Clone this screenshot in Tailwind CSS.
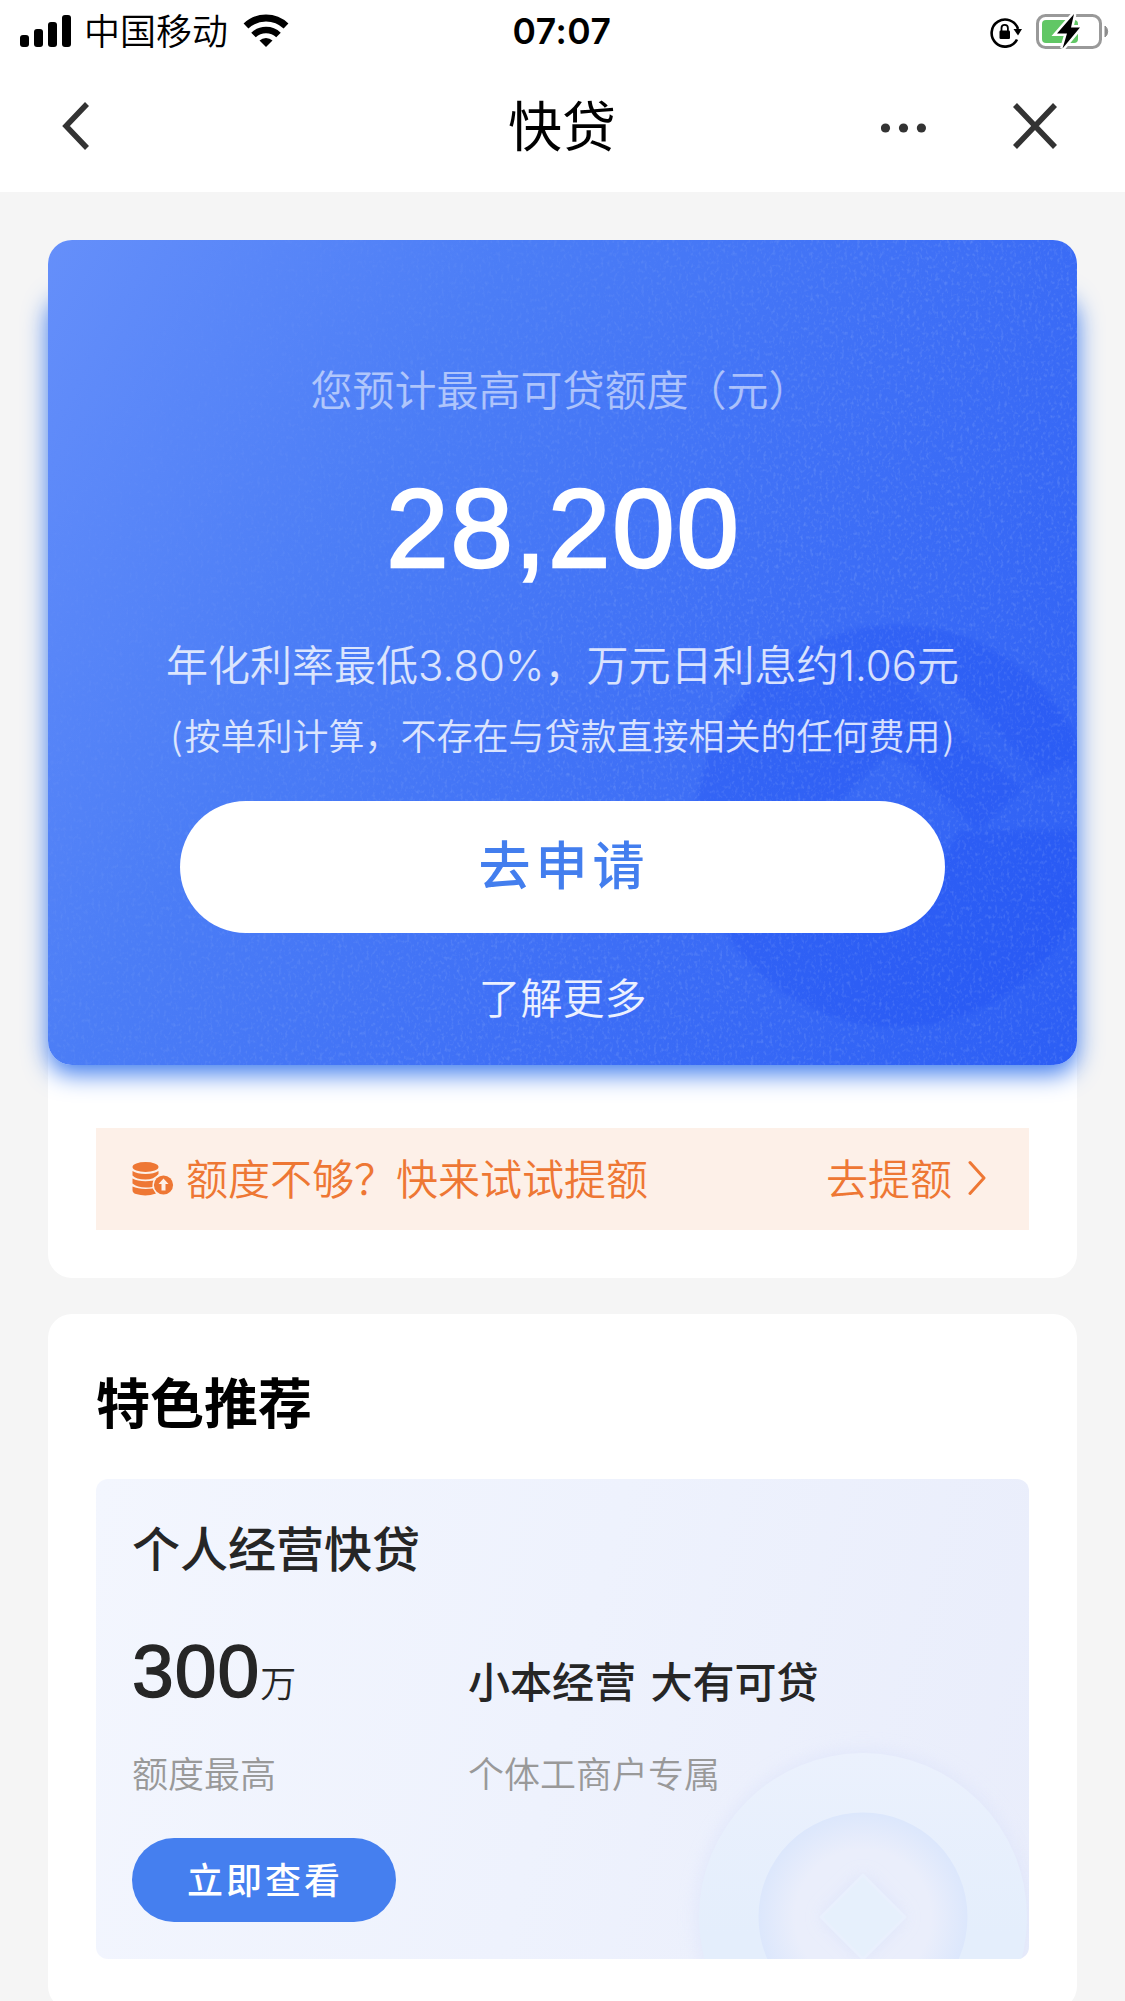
<!DOCTYPE html>
<html lang="zh-CN">
<head>
    <meta charset="UTF-8">
    <meta name="viewport" content="width=device-width, initial-scale=1.0">
    <title>快贷</title>
    <script src="https://cdn.jsdelivr.net/npm/@tailwindcss/browser@4"></script>
    <style>
        body {
            font-family: 'Noto Sans CJK SC', sans-serif;
            background-color: #f5f5f5;
        }
    </style>
</head>
<body>
<div class="w-[1125px] h-[2001px] overflow-hidden bg-[#f5f5f5]">
    <!-- Header -->
    <header class="h-48 bg-white">
        <div class="h-[60px] grid grid-cols-3 items-center pl-5 pr-[15px] text-black">
            <div class="flex items-center">
                <svg width="51" height="32" viewBox="0 0 51 32">
                    <rect x="0" y="20" width="9" height="12" rx="3"/>
                    <rect x="14" y="14" width="9" height="18" rx="3"/>
                    <rect x="28" y="7" width="9" height="25" rx="3"/>
                    <rect x="42" y="0" width="9" height="32" rx="3"/>
                </svg>
                <span class="ml-[13px] -mt-1 text-[36px] leading-[60px] font-[350]">中国移动</span>
                <svg class="ml-[15px] -mt-0.5" width="46" height="33" viewBox="0 0 46 33">
                    <path d="M3 12 A29 29 0 0 1 43 12" fill="none" stroke="#000" stroke-width="7"/>
                    <path d="M10.5 21 A18 18 0 0 1 35.500 21" fill="none" stroke="#000" stroke-width="6.500"/>
                    <path d="M23 33 L16.500 26.500 A9.500 9.500 0 0 1 29.500 26.500 Z"/>
                </svg>
            </div>
            <div class="text-center font-semibold text-[35.5px] leading-[60px] tracking-[0.5px] mt-0.5 -ml-1.5 font-[Inter]">07:07</div>
            <div class="flex items-center justify-end gap-[14px]">
                <svg class="mt-0.5" width="32" height="34" viewBox="0 0 32 34">
                    <path d="M27 24.500 A13.500 13.500 0 1 1 28 14" fill="none" stroke="#000" stroke-width="2.600"/>
                    <path d="M23.500 14 L32 14 L28 20.500 Z"/>
                    <rect x="9.500" y="15.500" width="10.500" height="8.500" rx="1.200"/>
                    <path d="M11.500 16 V13 a3.200 3.200 0 0 1 6.400 0 V16" fill="none" stroke="#000" stroke-width="1.800"/>
                </svg>
                <svg width="74" height="36" viewBox="0 0 74 36">
                    <rect x="1.500" y="2.500" width="63" height="32" rx="8" fill="none" stroke="#999" stroke-width="3"/>
                    <rect x="6" y="7" width="36" height="23" rx="4" fill="#61c765"/>
                    <path d="M69 13 a7 7 0 0 1 0 11 Z" fill="#8c8c8c" stroke="#8c8c8c"/>
                    <path d="M38 1 L21 20.500 L31 20.500 L26.500 35.500 L44 14.500 L35 14.500 Z" stroke="#fff" stroke-width="5"/>
                    <path d="M38 1 L21 20.500 L31 20.500 L26.500 35.500 L44 14.500 L35 14.500 Z"/>
                </svg>
            </div>
        </div>
        <div class="h-[132px] grid grid-cols-3 items-center pl-[62px] pr-[68px]">
            <svg width="28" height="48" viewBox="0 0 28 48" fill="none" stroke="#333" stroke-width="5.500">
                <path d="M25 2 L4 24 L25 46"/>
            </svg>
            <h1 class="text-center text-[54px] leading-[132px] -mt-1 ml-[5px] text-black">快贷</h1>
            <div class="flex items-center justify-end gap-[87px]">
                <svg class="mt-1" width="45" height="10" viewBox="0 0 45 10" fill="#333">
                    <circle cx="4.500" cy="5" r="4.600"/><circle cx="22.500" cy="5" r="4.600"/><circle cx="40.400" cy="5" r="4.600"/>
                </svg>
                <svg width="44" height="46" viewBox="0 0 44 46" stroke="#333" stroke-width="5.500">
                    <path d="M2 2 L42 44 M42 2 L2 44"/>
                </svg>
            </div>
        </div>
    </header>

    <main class="px-12 pt-12">
        <!-- Credit limit -->
        <section class="bg-white rounded-3xl pb-12">
            <div class="relative h-[825px]">
                <div class="absolute inset-x-0 top-12 bottom-0 rounded-3xl shadow-[0_9px_24px_0_#3f7cee]"></div>
                <div class="absolute inset-0 rounded-3xl overflow-hidden bg-[linear-gradient(119deg,#658ffa_0%,#4b7df6_32%,#3e6ff6_62%,#2c5ef5_100%)]">
                    <svg width="1029" height="825" viewBox="0 0 1029 825">
                        <filter id="grain" x="0" y="0" width="100%" height="100%">
                            <feTurbulence type="fractalNoise" baseFrequency="0.32 0.24" numOctaves="2" seed="4"/>
                            <feColorMatrix values="0 0 0 0 0.6  0 0 0 0 0.75  0 0 0 0 1  1.500 0 0 0 -0.750"/>
                        </filter>
                        <linearGradient id="grainFade" x1="0" y1="0" x2="1" y2="0.500">
                            <stop offset="0.050" stop-color="#000"/>
                            <stop offset="0.700" stop-color="#fff"/>
                        </linearGradient>
                        <mask id="grainMask"><rect width="1029" height="825" fill="url(#grainFade)"/></mask>
                        <filter id="edge"><feGaussianBlur stdDeviation="2"/></filter>
                        <!-- coin with the pen cut out of it -->
                        <mask id="coin">
                            <g filter="url(#edge)">
                                <circle cx="848" cy="586" r="201" fill="#fff"/>
                                <path d="M840 512 L776 576 L850 700 L912 592 L1029 592 L1029 520 L982 540 L930 590 L862 523 Z" fill="#000"/>
                                <path d="M880 420 L990 532 L972 548 L862 450 Z" fill="#000" opacity="0.800"/>
                            </g>
                        </mask>
                        <rect x="640" y="370" width="389" height="430" fill="#1848f2" opacity="0.240" mask="url(#coin)"/>
                        <g mask="url(#grainMask)"><rect width="1029" height="825" filter="url(#grain)" opacity="0.300"/></g>
                    </svg>
                </div>
                <div class="relative flex flex-col items-center text-white">
                    <p class="mt-[118px] text-[42px] leading-[60px] font-[350] text-white/55">您预计最高可贷额度<span class="-ml-1 mr-1">（元）</span></p>
                    <p class="mt-[46px] text-[112px] leading-[130px] tracking-[2px] pl-0.5 font-['Liberation_Sans'] [-webkit-text-stroke:2.500px_#fff]">28,200</p>
                    <p class="mt-[39px] text-[42px] leading-[60px] font-[350] text-white/80 whitespace-nowrap">年化利率最低<span class="font-[Inter] font-light">3.80%</span>，万元日利息约<span class="font-[Inter] font-light">1.06</span>元</p>
                    <p class="mt-[12px] text-[36px] leading-[52px] font-[350] text-white/80 whitespace-nowrap"><span class="mr-0.5">(</span>按单利计算，不存在与贷款直接相关的任何费用<span class="ml-0.5">)</span></p>
                    <button class="mt-[41px] w-[765px] h-[132px] rounded-full bg-white text-[#437eee] text-[52px] leading-none font-medium tracking-[5px] pl-[3px] pb-[8px]">去申请</button>
                    <a class="mt-[33px] text-[42px] leading-[60px] font-[350] text-white/90">了解更多</a>
                </div>
            </div>
            <div class="mt-[63px] mx-12 h-[102px] pl-9 pr-[43px] flex items-center bg-[#fdf0e8] text-[#ee7734] text-[42px] leading-[98px]">
                <svg width="42" height="34" viewBox="0 0 42 34" fill="#ee7734">
                    <ellipse cx="13.500" cy="5" rx="13" ry="5"/>
                    <path d="M0.500 9 Q5 12 13.500 12 Q22 12 26.500 9 V12 Q22 17.500 13.500 17.500 Q4 17.500 0.500 13.500 Z"/>
                    <path d="M0.500 16.500 Q8 20.500 22 18.500 L20.500 25 Q7 27 0.500 21.500 Z"/>
                    <path d="M0.500 24.500 Q8 28 21 26.500 L24 31.500 Q14 35 4 32 Q0.500 31 0.500 28 Z"/>
                    <circle cx="31.500" cy="23" r="11" fill="#fdf0e8"/>
                    <circle cx="31.500" cy="23" r="9.600"/>
                    <path d="M31.500 16.500 L36.500 22 H33.500 V28.500 H29.500 V22 H26.500 Z" fill="#fdf0e8"/>
                </svg>
                <span class="ml-3 -mt-1 font-[350]">额度不够？快来试试提额</span>
                <span class="ml-auto -mt-1 font-[350]">去提额</span>
                <svg class="ml-4 -mt-0.5" width="18" height="36" viewBox="0 0 18 36" fill="none" stroke="#ee7734" stroke-width="3" stroke-linecap="round" stroke-linejoin="round">
                    <path d="M2 2.500 L16 18 L2 33.500"/>
                </svg>
            </div>
        </section>

        <!-- Featured -->
        <section class="mt-9 h-[696px] bg-white rounded-3xl px-12 pt-[47px]">
            <h2 class="text-[54px] leading-[80px] font-bold text-black">特色推荐</h2>
            <div class="relative mt-[38px] h-[480px] rounded-xl overflow-hidden bg-[linear-gradient(105deg,#f3f6fe_0%,#eef2fd_50%,#e9edfb_100%)] px-9 text-[#262626]">
                <svg class="absolute right-0 bottom-0" width="429" height="280" viewBox="0 0 429 280">
                    <filter id="soft" x="-20%" y="-20%" width="140%" height="140%"><feGaussianBlur stdDeviation="9"/></filter>
                    <linearGradient id="ring" x1="0" y1="0" x2="0" y2="1">
                        <stop offset="0" stop-color="#ebf1fd"/>
                        <stop offset="0.550" stop-color="#e4eefc"/>
                    </linearGradient>
                    <radialGradient id="well">
                        <stop offset="0.650" stop-color="#eaeefb"/>
                        <stop offset="1" stop-color="#dce7fc"/>
                    </radialGradient>
                    <circle cx="263" cy="238" r="166" fill="#dce3fa" opacity="0.700" filter="url(#soft)"/>
                    <circle cx="263" cy="238" r="164" fill="url(#ring)"/>
                    <circle cx="263" cy="238" r="104.500" fill="url(#well)"/>
                    <path d="M263 196 L305 238 L263 280 L221 238 Z" fill="#d9e1fa" opacity="0.800" filter="url(#soft)"/>
                    <path d="M263 196 L305 238 L263 280 L221 238 Z" fill="#e6f0fc" stroke="#e9f0fd" stroke-width="3" stroke-linejoin="round"/>
                </svg>
                <div class="relative">
                    <h3 class="pt-[31px] text-[48px] leading-[72px] font-medium">个人经营快贷</h3>
                    <div class="mt-[47px] grid grid-cols-[336px_1fr]">
                        <div>
                            <p class="h-[84px] flex items-baseline"><span class="text-[75px] leading-[84px] tracking-[1px] font-['Liberation_Sans'] [-webkit-text-stroke:1.500px_#262626]">300</span><span class="text-[36px] font-[350] leading-none">万</span></p>
                            <p class="mt-[32px] text-[36px] leading-[54px] font-[350] text-[#999]">额度最高</p>
                        </div>
                        <div>
                            <p class="h-[84px] pt-[17px] text-[42px] leading-[68px] font-medium [word-spacing:5px]">小本经营 大有可贷</p>
                            <p class="mt-[32px] text-[36px] leading-[54px] font-[350] text-[#999]">个体工商户专属</p>
                        </div>
                    </div>
                    <button class="mt-[39px] w-[264px] h-[84px] rounded-full bg-[#457fef] text-white text-[36px] leading-none font-medium tracking-[3px] pl-0.5 pb-[5px]">立即查看</button>
                </div>
            </div>
        </section>
    </main>
</div>
</body>
</html>
